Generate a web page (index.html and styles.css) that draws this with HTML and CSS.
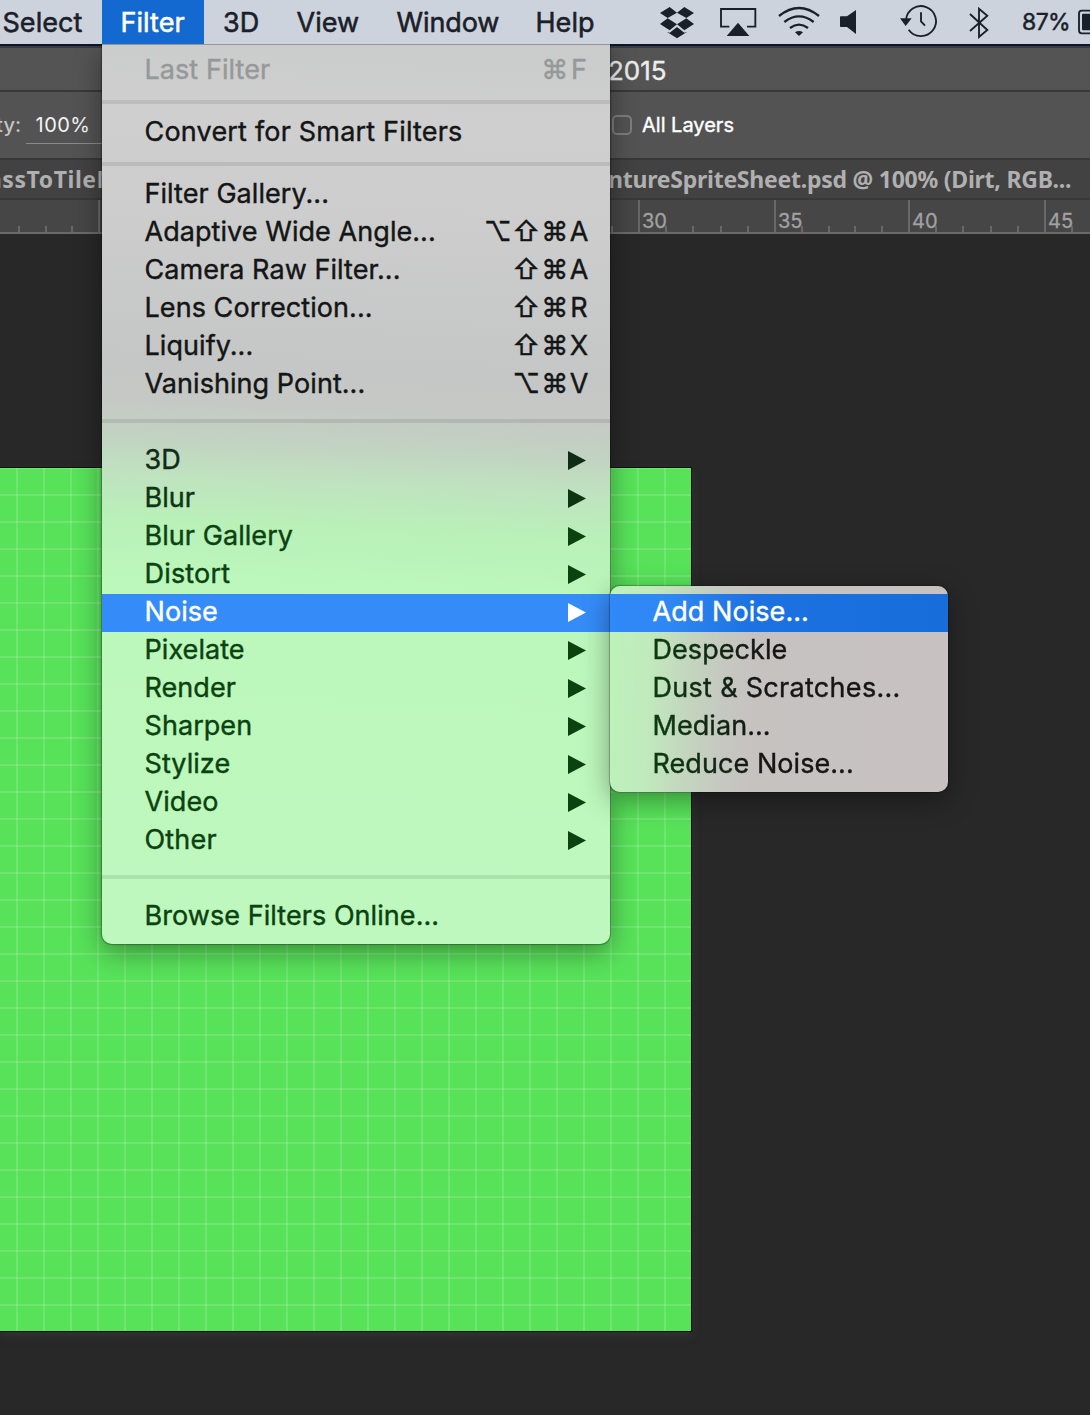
FILE: index.html
```html
<!DOCTYPE html>
<html lang="en">
<head>
<meta charset="utf-8">
<title>Filter menu</title>
<link rel="stylesheet" href="styles.css">
</head>
<body>
<div class="screen">
  <header class="menubar">
    <nav class="menubar-items">
      <span class="mb mb-select">Select</span>
      <span class="mb mb-filter is-open">Filter</span>
      <span class="mb mb-3d">3D</span>
      <span class="mb mb-view">View</span>
      <span class="mb mb-window">Window</span>
      <span class="mb mb-help">Help</span>
    </nav>
    <div class="status">
      <svg width="53" height="44" viewBox="42 0 159 132"><path d="M60 39 89 21 111 38 83 54ZM162 39 133 21 111 38 139 54ZM60 72 83 55 111 73 89 91ZM162 72 139 55 111 73 133 91ZM80 95 89 98 111 81 133 98 142 95 111 115Z"/></svg>
      <svg width="61" height="44" viewBox="201 0 183 132"><path class="ln" d="M268 80H243V27H346V80H321"/><path d="M294 68 328 108H260Z"/></svg>
      <svg width="62" height="44" viewBox="384 0 186 132"><path class="wf" d="M417 48Q477 0 537 48M433 66Q477 32 521 66M450 84Q477 64 504 84"/><path d="M465 97Q477 89 489 97L477 108Z"/></svg>
      <svg width="48" height="44" viewBox="570 0 144 132"><path d="M602 49H621L648 30V102L621 81H602Q600 81 600 79V51Q600 49 602 49Z"/></svg>
      <svg width="74" height="44" viewBox="714 0 222 132"><path class="ln" d="M798 61A45 45 0 1 1 806 89M843 37V64L855 77"/><path d="M780 55H815L797 78Z"/></svg>
      <svg width="56" height="44" viewBox="936 0 168 132"><path class="ln" d="M990 42 1042 90 1017 111V26L1042 47 990 93"/></svg>
      <span class="battery-pct">87%</span>
      <svg width="12" height="44" viewBox="1314 0 36 132"><path class="ln" d="M1360 32H1325Q1317 32 1317 41V91Q1317 100 1325 100H1360"/><path d="M1329 41H1360V91H1329Q1326 91 1326 88V44Q1326 41 1329 41Z"/></svg>
    </div>
  </header>

  <div class="titlebar">2015</div>
  <div class="options">
    <span class="opt-label">ty:</span>
    <span class="opt-value">100%</span>
    <span class="checkbox"></span>
    <span class="opt-check-label">All Layers</span>
  </div>
  <div class="tabs">
    <span class="tab tab-left">assToTileM</span>
    <span class="tab tab-right">ntureSpriteSheet.psd @ 100% (Dirt, RGB...</span>
  </div>
  <div class="ruler">
    <div class="seg seg-lead"><i></i><i></i><i></i></div>
    <div class="seg seg-wide"><i></i><i></i><i></i><i></i><i></i></div>
    <div class="seg seg-wide"><i></i><i></i><i></i><i></i><i></i></div>
    <div class="seg seg-wide"><i></i><i></i><i></i><i></i><i></i></div>
    <div class="seg seg-wide"><i></i><i></i><i></i><i></i><i></i></div>
    <div class="seg seg-a"><b>30</b><i></i><i></i><i></i><i></i><i></i></div>
    <div class="seg seg-b"><b>35</b><i></i><i></i><i></i><i></i><i></i></div>
    <div class="seg seg-a"><b>40</b><i></i><i></i><i></i><i></i><i></i></div>
    <div class="seg seg-a"><b>45</b><i></i><i></i><i></i><i></i><i></i></div>
  </div>
  <main class="workspace"><div class="artboard"></div></main>

  <div class="menu filter-menu">
    <div class="item disabled"><span>Last Filter</span><span class="keys"><kbd>⌘</kbd><kbd class="letter">F</kbd></span></div>
    <div class="sep"></div>
    <div class="item loose">Convert for Smart Filters</div>
    <div class="sep"></div>
    <div class="item">Filter Gallery...</div>
    <div class="item"><span>Adaptive Wide Angle...</span><span class="keys"><kbd>⌥</kbd><kbd>⇧</kbd><kbd>⌘</kbd><kbd class="letter">A</kbd></span></div>
    <div class="item"><span>Camera Raw Filter...</span><span class="keys"><kbd>⇧</kbd><kbd>⌘</kbd><kbd class="letter">A</kbd></span></div>
    <div class="item"><span>Lens Correction...</span><span class="keys"><kbd>⇧</kbd><kbd>⌘</kbd><kbd class="letter">R</kbd></span></div>
    <div class="item"><span>Liquify...</span><span class="keys"><kbd>⇧</kbd><kbd>⌘</kbd><kbd class="letter">X</kbd></span></div>
    <div class="item"><span>Vanishing Point...</span><span class="keys"><kbd>⌥</kbd><kbd>⌘</kbd><kbd class="letter">V</kbd></span></div>
    <div class="sep tall"></div>
    <div class="item sub tint-1">3D</div>
    <div class="item sub tint-2">Blur</div>
    <div class="item sub tint-3">Blur Gallery</div>
    <div class="item sub tint-3 loose">Distort</div>
    <div class="item sub active">Noise</div>
    <div class="item sub tint-3">Pixelate</div>
    <div class="item sub tint-3">Render</div>
    <div class="item sub tint-3">Sharpen</div>
    <div class="item sub tint-3">Stylize</div>
    <div class="item sub tint-3">Video</div>
    <div class="item sub tint-3 loose">Other</div>
    <div class="sep tall"></div>
    <div class="item tint-3">Browse Filters Online...</div>
  </div>

  <div class="menu noise-menu">
    <div class="item active">Add Noise...</div>
    <div class="item"><span class="fade">Despeckle</span></div>
    <div class="item looser"><span class="fade">Dust &amp; Scratches...</span></div>
    <div class="item"><span class="fade">Median...</span></div>
    <div class="item"><span class="fade">Reduce Noise...</span></div>
  </div>
</div>
</body>
</html>
```
FILE: styles.css
```css
* { box-sizing: border-box; }
body { margin: 0; background: #282828; }

.screen {
  position: relative;
  width: 1090px;
  height: 1415px;
  overflow: hidden;
  display: flex;
  flex-direction: column;
  background: #282828;
  font-family: Inter, "Liberation Sans", sans-serif;
}

/* system menu bar */
.menubar {
  position: relative;
  z-index: 3;
  flex: none;
  display: flex;
  justify-content: space-between;
  height: 44px;
  background: #cdd3dc;
  color: #1a2029;
}
.menubar-items { display: flex; }
.mb {
  height: 44px;
  line-height: 45px;
  font-size: 27px;
  letter-spacing: .05px;
  -webkit-text-stroke: 0.55px currentColor;
  white-space: nowrap;
}
.mb-select { width: 102px; padding-left: 2.5px; }
.mb-filter { width: 102px; padding-left: 18.5px; }
.mb-3d { width: 74px; padding-left: 19px; }
.mb-view { width: 100px; padding-left: 18.5px; }
.mb-window { width: 139px; padding-left: 18.5px; letter-spacing: -.1px; }
.mb-help { width: 90px; padding-left: 18.5px; }
.mb.is-open { background: #1369d0; color: #fff; }
.status { display: flex; width: 436px; flex: none; }
.status svg { flex: none; display: block; fill: #1a2029; }
.status .ln { fill: none; stroke: #1a2029; stroke-width: 5.6; }
.status .wf { fill: none; stroke: #1a2029; stroke-width: 7; }
.battery-pct {
  width: 70px;
  padding-left: 14px;
  line-height: 44px;
  font-size: 23px;
  letter-spacing: -0.6px;
  -webkit-text-stroke: 0.45px currentColor;
}

/* application chrome */
.titlebar {
  flex: none;
  height: 48px;
  padding-left: 608px;
  border-top: 2px solid #0c1730;
  border-bottom: 2px solid #383838;
  background: linear-gradient(#3c3c3e 0 2px, #545454 2px);
  color: #ececec;
  font-size: 26px;
  line-height: 50px;
  -webkit-text-stroke: .4px currentColor;
}
.options {
  flex: none;
  display: flex;
  align-items: center;
  height: 68px;
  border-bottom: 2px solid #383838;
  background: #535353;
  color: #fff;
  font-size: 20px;
}
.opt-label { width: 30px; margin-left: -4px; color: #c4c4c4; font-weight: 500; letter-spacing: .2px; }
.opt-value {
  width: 100px;
  height: 37px;
  padding-left: 9.5px;
  margin: 1px 486px 0 0;
  line-height: 36px;
  border-bottom: 1px solid #8a8a8a;
  color: #f4f4f4;
  letter-spacing: .5px;
}
.checkbox { width: 20px; height: 20px; margin-top: -1px; border: 2px solid #7d7d7d; border-radius: 5px; }
.opt-check-label { padding-left: 10px; -webkit-text-stroke: .4px #fff; }
.tabs {
  flex: none;
  display: flex;
  height: 40px;
  border-bottom: 2px solid #393939;
  background: #424242;
}
.tab {
  font: bold 23px/38px "Noto Sans", "Open Sans", sans-serif;
  letter-spacing: -.24px;
  color: #b0b0b0;
  white-space: nowrap;
}
.tab-left { width: 620px; margin-left: -12px; letter-spacing: .55px; }

/* horizontal ruler: a long tick every five units */
.ruler {
  flex: none;
  display: flex;
  height: 34px;
  border-bottom: 2px solid #6a6a6a;
  background: #464646;
}
.seg { position: relative; flex: none; display: flex; align-items: flex-end; }
.seg i { flex: 1; height: 6px; border-left: 2px solid #686868; }
.seg i:first-of-type { height: 32px; }
.seg-lead { width: 80px; margin-left: 18px; }
.seg-lead i:first-of-type { height: 6px; }
.seg-wide { width: 135px; }
.seg-a { width: 136px; }
.seg-b { width: 134px; }
.seg b {
  position: absolute;
  left: 4px;
  top: 8px;
  font-size: 20px;
  line-height: 26px;
  font-weight: 400;
  color: #a2a2a2;
  -webkit-text-stroke: .3px currentColor;
}

/* document canvas */
.workspace { flex: 1; padding-top: 233px; }
.artboard {
  width: 692px;
  height: 865px;
  border: 1px solid #081008;
  border-left: 0;
  background:
    linear-gradient(90deg, rgba(255,255,255,.13) 2px, transparent 2px) 16px 0 / 27px 27px,
    linear-gradient(180deg, rgba(255,255,255,.14) 2px, transparent 2px) 0 26px / 27px 27px,
    #58e25a;
  box-shadow: 0 4px 8px rgba(70,70,74,.35);
}

/* menus */
.menu {
  position: absolute;
  padding: 8px 0;
  font-size: 27px;
  color: #141515;
}
.filter-menu {
  z-index: 1;
  left: 102px;
  top: 44px;
  width: 508px;
  height: 900px;
  border-radius: 0 0 10px 10px;
  background: linear-gradient(182.5deg, #cacbcb 0%, #cfcfd0 9%, #cdcdcd 20%, #c5c6c6 36%, #c5c9c5 41%, #c2d3c2 45%, #bfe3bf 49%, #b9f1b8 54%, #bcf7bb 60%, #bff8be 100%);
  box-shadow: inset 0 1px 0 rgba(80,85,92,.45), 0 0 1px 1px rgba(0,0,0,.3), 0 8px 28px rgba(0,0,0,.38);
}
.noise-menu {
  z-index: 2;
  left: 610px;
  top: 586px;
  width: 338px;
  height: 206px;
  border-radius: 10px;
  background: linear-gradient(92deg, #bdf2ba 0%, #c1eabd 12%, #c3d8be 22%, #c5c9c0 33%, #c6c2c0 43%, #c7c2c1 100%);
  box-shadow: 0 0 1px 1px rgba(0,0,0,.25), 0 8px 28px rgba(0,0,0,.38);
}
.item {
  display: flex;
  justify-content: space-between;
  height: 38px;
  padding: 0 21px 2px 42.5px;
  line-height: 36px;
  letter-spacing: .06px;
  -webkit-text-stroke: .4px currentColor;
  white-space: nowrap;
}
.item.loose { letter-spacing: .19px; }
.item.looser { letter-spacing: .3px; }
.item.disabled { color: #979899; }
.item.active { background: #358cf9; color: #fff; }
.noise-menu .active {
  background: linear-gradient(90deg, #3089f8 0%, #2f87f4 18%, #1c72e0 42%, #176edb 100%);
}
.tint-1 { color: #102b16; }
.tint-2 { color: #0c3512; }
.tint-3 { color: #0b4210; }
.fade {
  color: transparent;
  -webkit-text-stroke: .4px transparent;
  -webkit-background-clip: text;
  background-clip: text;
  background-image: linear-gradient(90deg, #0d3b12, #151515 110px);
}
.sep { height: 24px; padding-top: 10px; }
.sep::before { content: ""; display: block; height: 4px; background: rgba(0,0,0,.09); }
.sep.tall { height: 38px; padding-top: 15px; }
.keys { display: flex; }
.keys kbd { width: 28.5px; font: inherit; text-align: center; }
.keys .letter { width: 20px; }
.sub { align-items: center; padding-right: 24px; }
.sub::after {
  content: "";
  width: 18px;
  height: 19px;
  margin-top: 1px;
  background: currentColor;
  clip-path: polygon(0 0, 100% 50%, 0 100%);
}
```
